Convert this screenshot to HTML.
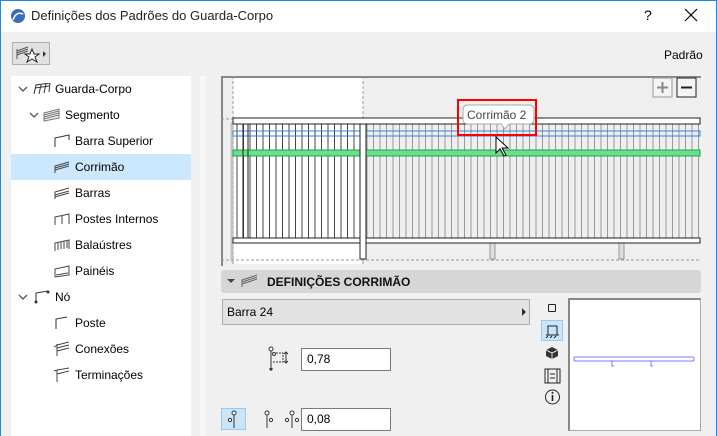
<!DOCTYPE html>
<html><head><meta charset="utf-8"><style>
*{margin:0;padding:0;box-sizing:border-box}
body{width:717px;height:436px;overflow:hidden;background:#f0f0f0;font-family:"Liberation Sans",sans-serif;font-size:12px;color:#000;position:relative}
.a{position:absolute}
.tree div.r{position:absolute;left:0;width:180px;height:26px;line-height:26px;white-space:nowrap}
.inp{position:absolute;background:#fff;border:1px solid #7a7a7a;padding-left:5px;line-height:20px;font-size:12px}
</style></head><body>
<div class="a" style="left:0;top:0;width:717px;height:32px;background:#fff;border-top:1px solid #1e88e5;border-left:1px solid #1e88e5;border-right:1px solid #1e88e5"></div>
<div class="a" style="left:0;top:0;width:1px;height:436px;background:#1e88e5"></div>
<div class="a" style="left:716px;top:0;width:1px;height:436px;background:#1e88e5"></div>
<svg class="a" style="left:10px;top:8px" width="16" height="16"><circle cx="8" cy="8" r="7" fill="#3a6cc0"/><path d="M3 12 Q6 3 13 6" stroke="#fff" stroke-width="1.6" fill="none"/></svg>
<div class="a" style="left:31px;top:8px;font-size:13px;color:#222">Definições dos Padrões do Guarda-Corpo</div>
<div class="a" style="left:644px;top:7px;font-size:14px">?</div>
<svg class="a" style="left:684px;top:8px" width="14" height="14"><path d="M1 1 L13 13 M13 1 L1 13" stroke="#000" stroke-width="1.2"/></svg>

<div class="a" style="left:12px;top:42px;width:38px;height:23px;background:#e1e1e1;border:1px solid #adadad"></div>
<svg class="a" style="left:14px;top:43px" width="36" height="22"><path d="M3 8 L14 4 M3 10 L14 6 M3 12 L14 8 M3 6 V16" stroke="#555" stroke-width="1" fill="none"/><path d="M18 6 L20 11 L25 11 L21 14 L23 19 L18 16 L13 19 L15 14 L11 11 L16 11Z" fill="#fff" stroke="#222"/><path d="M29 8 L32 11 L29 14Z" fill="#333"/></svg>
<div class="a" style="left:664px;top:48px;font-size:12px">Padrão</div>

<div class="a tree" style="left:11px;top:76px;width:180px;height:360px;background:#fff">
<div class="r" style="top:0"><svg class="a" style="left:7px;top:10px" width="10" height="7"><path d="M1 1 L5 5 L9 1" stroke="#555" stroke-width="1.3" fill="none"/></svg><svg class="a" style="left:22px;top:7px" width="18" height="12"><path d="M1 11 L3 2 L17 0 M6 11 L8 2 M11 10 L13 1 M16 9 L17 0 M2 5 L16 3" stroke="#333" fill="none"/></svg><span class="a" style="left:44px">Guarda-Corpo</span></div>
<div class="r" style="top:26px"><svg class="a" style="left:18px;top:10px" width="10" height="7"><path d="M1 1 L5 5 L9 1" stroke="#555" stroke-width="1.3" fill="none"/></svg><svg class="a" style="left:32px;top:6px" width="18" height="14"><path d="M1 5 L16 1 V10 L1 13Z M1 7 L16 3 M1 9 L16 5 M1 11 L16 7" stroke="#777" fill="#f4f4f4"/></svg><span class="a" style="left:54px">Segmento</span></div>
<div class="r" style="top:52px"><svg class="a" style="left:42px;top:6px" width="18" height="14"><path d="M2 13 V4 L16 1 V6" stroke="#333" fill="none"/></svg><span class="a" style="left:64px">Barra Superior</span></div>
<div class="r" style="top:78px;background:#cce8ff"><svg class="a" style="left:42px;top:6px" width="18" height="14"><path d="M2 13 V6 M2 6 L16 2 M2 8 L16 4 M2 10 L16 6" stroke="#444" fill="none"/></svg><span class="a" style="left:64px">Corrimão</span></div>
<div class="r" style="top:104px"><svg class="a" style="left:42px;top:6px" width="18" height="14"><path d="M2 13 V6 L16 2 M2 9 L16 5 M2 11 L16 7" stroke="#444" fill="none"/></svg><span class="a" style="left:64px">Barras</span></div>
<div class="r" style="top:130px"><svg class="a" style="left:42px;top:6px" width="18" height="14"><path d="M2 13 V5 L16 2 V12 M9 12 V4" stroke="#444" fill="none"/></svg><span class="a" style="left:64px">Postes Internos</span></div>
<div class="r" style="top:156px"><svg class="a" style="left:42px;top:6px" width="18" height="14"><path d="M2 13 V5 L16 2 V11 M5 12 V5 M8 11 V4 M11 11 V3 M14 10 V3" stroke="#444" fill="none"/></svg><span class="a" style="left:64px">Balaústres</span></div>
<div class="r" style="top:182px"><svg class="a" style="left:42px;top:6px" width="18" height="14"><path d="M2 13 V5 L16 2 V11 L2 13 M3 11 L15 9" stroke="#444" fill="none"/></svg><span class="a" style="left:64px">Painéis</span></div>
<div class="r" style="top:208px"><svg class="a" style="left:7px;top:10px" width="10" height="7"><path d="M1 1 L5 5 L9 1" stroke="#555" stroke-width="1.3" fill="none"/></svg><svg class="a" style="left:22px;top:6px" width="18" height="14"><path d="M3 13 V3 L15 1" stroke="#333" fill="none"/><circle cx="3" cy="12" r="1.5" fill="#333"/><circle cx="15" cy="2" r="1.5" fill="#333"/></svg><span class="a" style="left:44px">Nó</span></div>
<div class="r" style="top:234px"><svg class="a" style="left:42px;top:6px" width="18" height="14"><path d="M3 13 V3 L14 1" stroke="#333" fill="none"/></svg><span class="a" style="left:64px">Poste</span></div>
<div class="r" style="top:260px"><svg class="a" style="left:42px;top:5px" width="18" height="16"><path d="M4 15 V3 M4 4 L16 1 M4 7 L16 4 M4 10 L16 7 M1 6 L4 4" stroke="#444" fill="none"/></svg><span class="a" style="left:64px">Conexões</span></div>
<div class="r" style="top:286px"><svg class="a" style="left:42px;top:5px" width="18" height="16"><path d="M4 15 V3 L16 1 M4 7 L16 4 M1 4 L4 3" stroke="#444" fill="none"/></svg><span class="a" style="left:64px">Terminações</span></div>
</div>

<div class="a" style="left:200px;top:76px;width:6px;height:360px;background:#f7f7f7"></div>

<svg class="a" style="left:221px;top:76px" width="480" height="190">
<rect x="0" y="0" width="480" height="190" fill="#efefef"/>
<rect x="12" y="1" width="130" height="187" fill="#fff"/>
<path d="M1 0 V190 M0 1 H480" stroke="#888" stroke-width="2"/>
<path d="M12 0 V190 M142 0 V190 M0 43 H12 M0 184 H480" stroke="#999" stroke-dasharray="3,2" fill="none"/>
<rect x="10" y="47" width="2" height="138" fill="#ccc" stroke="#999" stroke-width="0.5"/>
<g id="bal"></g>
<rect x="269" y="167" width="5" height="16" fill="#ddd" stroke="#999"/>
<rect x="398" y="167" width="5" height="16" fill="#ddd" stroke="#999"/>
<rect x="12" y="42" width="467" height="6" fill="#fff" stroke="#222"/>
<rect x="12" y="55" width="467" height="5" fill="none" stroke="#3a7fe0"/>
<rect x="12" y="74" width="467" height="6" fill="#6ede8e" stroke="#1a4"/>
<rect x="12" y="162" width="467" height="5" fill="#fff" stroke="#222"/>
<rect x="139" y="48" width="6" height="135" fill="#fff" stroke="#222"/>
<rect x="22" y="48" width="5" height="114" fill="none" stroke="#222"/>
<rect x="432" y="2" width="19" height="19" fill="#f4f4f4" stroke="#999"/>
<path d="M436 11.5 H447 M441.5 6 V17" stroke="#888" stroke-width="2"/>
<rect x="456" y="2" width="19" height="19" fill="#f4f4f4" stroke="#222"/>
<path d="M460 11.5 H471" stroke="#222" stroke-width="2"/>
<rect x="237" y="24" width="78" height="35" fill="none" stroke="#f00" stroke-width="2"/>
<path d="M247 29 H308 Q313 29 313 34 V43 Q313 48 308 48 H288 L284 53 L280 48 H247 Q242 48 242 43 V34 Q242 29 247 29Z" fill="#fff" stroke="#aaa"/>
<text x="246" y="43" font-family="Liberation Sans" font-size="12" fill="#444">Corrimão 2</text>
<path d="M275 61 V77 L279 73 L283 80 L285 79 L281 72 L287 72Z" fill="#fff" stroke="#000"/>
</svg>
<script>
var g=document.getElementById('bal'),s='';
for(var x=16;x<478;x+=6.5){var c=x<142?'#444':'#999';s+='<line x1="'+x+'" y1="48" x2="'+x+'" y2="162" stroke="'+c+'" stroke-width="1"/>';}
g.innerHTML=s;
</script>

<div class="a" style="left:221px;top:270px;width:480px;height:23px;background:#d6d6d6;border-radius:3px"></div>
<div class="a" style="left:227px;top:279px;width:0;height:0;border-left:4px solid transparent;border-right:4px solid transparent;border-top:4px solid #444"></div>
<svg class="a" style="left:241px;top:274px" width="18" height="14"><path d="M1 13 V6 L16 1 M1 8 L16 3 M1 10 L16 5" stroke="#666" fill="none"/></svg>
<div class="a" style="left:267px;top:275px;font-weight:bold;font-size:12px;color:#111">DEFINIÇÕES CORRIMÃO</div>

<div class="a" style="left:222px;top:299px;width:308px;height:26px;background:#e2e2e2;border:1px solid #adadad"></div>
<div class="a" style="left:227px;top:305px">Barra 24</div>
<div class="a" style="left:522px;top:308px;border-top:4px solid transparent;border-bottom:4px solid transparent;border-left:4px solid #333"></div>

<svg class="a" style="left:266px;top:346px" width="26" height="28"><path d="M5 4 V21" stroke="#333"/><circle cx="5" cy="3" r="2" fill="#fff" stroke="#333"/><circle cx="8" cy="8" r="1.5" fill="#fff" stroke="#333"/><path d="M10 7 H17 V16 H6" stroke="#333" stroke-dasharray="2,1" fill="none"/><path d="M20 6 V17 M18 8 L20 6 L22 8 M18 15 L20 17 L22 15" stroke="#333" fill="none"/><circle cx="5" cy="23" r="1.6" fill="#333"/></svg>
<div class="inp" style="left:301px;top:348px;width:90px;height:23px">0,78</div>

<div class="a" style="left:221px;top:408px;width:25px;height:22px;background:#cce4f7;border:1px solid #99c9ef"></div>
<svg class="a" style="left:224px;top:410px" width="80" height="20"><g stroke="#333" fill="#fff"><path d="M10 4 V18" fill="none"/><circle cx="10" cy="3" r="2"/><circle cx="6" cy="10" r="1.6"/><path d="M43 4 V18" fill="none"/><circle cx="43" cy="3" r="2"/><circle cx="47" cy="10" r="1.6"/><path d="M68 4 V18" fill="none"/><circle cx="68" cy="3" r="2"/><circle cx="63" cy="10" r="1.6"/><circle cx="73" cy="10" r="1.6"/></g></svg>
<div class="inp" style="left:301px;top:408px;width:90px;height:23px">0,08</div>

<div class="a" style="left:548px;top:304px;width:8px;height:8px;border:1px solid #222;border-radius:1px"></div>
<div class="a" style="left:541px;top:320px;width:22px;height:21px;background:#cce4f7;border:1px solid #99c9ef"></div>
<svg class="a" style="left:542px;top:321px" width="22" height="110"><path d="M6 14 V5 H15 V14 M4 14 H17" stroke="#222" fill="none"/><path d="M4 17 L6 15 M8 17 L10 15 M12 17 L14 15" stroke="#222"/>
<path d="M10 26 L16 29 V35 L10 38 L4 35 V29Z" fill="#333"/><path d="M4 29 L10 32 L16 29 M10 32 V38" stroke="#fff" stroke-width="0.8" fill="none"/>
<rect x="3" y="48" width="15" height="14" fill="none" stroke="#222"/><path d="M6 48 V62 M15 48 V62 M8 53 H13 M8 57 H13" stroke="#222"/>
<circle cx="10.5" cy="76" r="7" fill="none" stroke="#222"/><path d="M10.5 74 V80" stroke="#222" stroke-width="1.6"/><circle cx="10.5" cy="71.8" r="1" fill="#222"/></svg>

<div class="a" style="left:568px;top:298px;width:133px;height:133px;background:#fff;border:1px solid #aaa;border-top:2px solid #888;border-left:2px solid #888"></div>
<svg class="a" style="left:572px;top:355px" width="128" height="20"><rect x="2" y="2" width="120" height="4" rx="1" fill="none" stroke="#7a7aff"/><path d="M40 6 V11 H42 M79 6 V11 H81" stroke="#7a7aff" fill="none"/></svg>
</body></html>
